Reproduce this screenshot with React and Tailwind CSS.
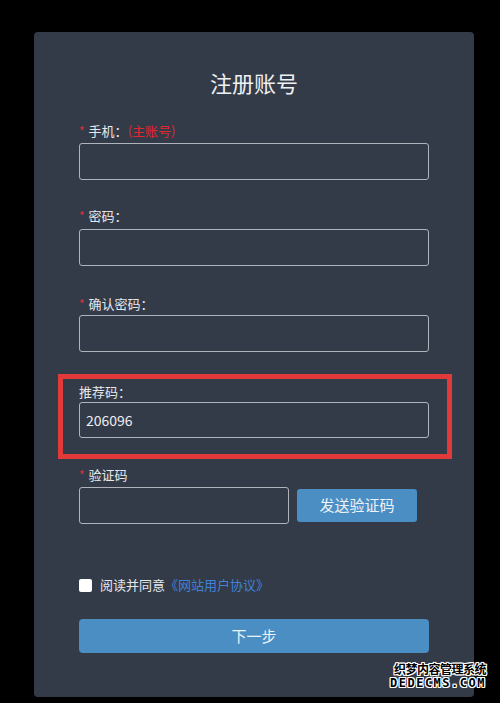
export default function App() {
  return (
    <div
      className="relative min-h-[703px] w-[500px] bg-black pt-[32px] pl-[34px]"
      style={{ fontFamily: '"Noto Sans CJK SC", "Noto Sans", sans-serif' }}
    >
      <div className="w-[440px] h-[665px] rounded-[4px] bg-[#343b48] px-[45px] pt-[35px]">
        <h1 className="text-center text-[22px] leading-[30px] text-[#eef0f3]">注册账号</h1>

        {/* 手机 */}
        <div className="mt-[25px] flex items-center text-[13px] leading-[18px] text-[#e6e8ec]">
          <span className="text-[#d8313b] mr-[4px] text-[12px]">*</span>
          <span>手机：</span>
          <span className="text-[#e0262f]">(主账号)</span>
        </div>
        <input className="mt-[3px] block w-[350px] h-[37px] rounded-[3px] border-[1.5px] border-[#aeb3bc] bg-transparent" />

        {/* 密码 */}
        <div className="mt-[27px] flex items-center text-[13px] leading-[18px] text-[#e6e8ec]">
          <span className="text-[#d8313b] mr-[4px] text-[12px]">*</span>
          <span>密码：</span>
        </div>
        <input type="password" className="mt-[4px] block w-[350px] h-[37px] rounded-[3px] border-[1.5px] border-[#aeb3bc] bg-transparent" />

        {/* 确认密码 */}
        <div className="mt-[29px] flex items-center text-[13px] leading-[18px] text-[#e6e8ec]">
          <span className="text-[#d8313b] mr-[4px] text-[12px]">*</span>
          <span>确认密码：</span>
        </div>
        <input type="password" className="mt-[2px] block w-[350px] h-[37px] rounded-[3px] border-[1.5px] border-[#aeb3bc] bg-transparent" />

        {/* 推荐码 highlighted */}
        <div className="mt-[22px] -ml-[21px] w-[394px] border-[5px] border-[#e23a3a] pl-[16px] pt-[4px] pb-[16px]">
          <div className="text-[13px] leading-[18px] text-[#e6e8ec]">推荐码：</div>
          <div className="mt-[1px] flex items-center w-[350px] h-[36px] rounded-[3px] border-[1.5px] border-[#aeb3bc] px-[6px] text-[14px] text-[#eceef1]">
            206096
          </div>
        </div>

        {/* 验证码 */}
        <div className="mt-[7px] flex items-center text-[13px] leading-[18px] text-[#e6e8ec]">
          <span className="text-[#d8313b] mr-[4px] text-[12px]">*</span>
          <span>验证码</span>
        </div>
        <div className="mt-[3px] flex items-center gap-[8px]">
          <input className="block w-[210px] h-[37px] rounded-[3px] border-[1.5px] border-[#aeb3bc] bg-transparent" />
          <button className="w-[120px] h-[33px] rounded-[3px] bg-[#4a8ec4] text-[15px] text-[#eef3f8]">
            发送验证码
          </button>
        </div>

        {/* 协议 */}
        <div className="mt-[52px] flex items-center text-[13px] leading-[18px]">
          <span className="w-[13px] h-[13px] rounded-[2px] bg-white mr-[8px]" />
          <span className="text-[#e6e8ec]">阅读并同意</span>
          <span className="text-[#3f82d6]">《网站用户协议》</span>
        </div>

        <button className="mt-[25px] w-[350px] h-[34px] rounded-[4px] bg-[#4a8ec4] text-[15px] text-[#eef3f8]">
          下一步
        </button>
      </div>

      <div className="absolute left-[390px] top-[661px] text-right font-bold leading-[15px] text-black [text-shadow:1px_0_0_#fff,-1px_0_0_#fff,0_1px_0_#fff,0_-1px_0_#fff,1px_1px_0_#fff,-1px_-1px_0_#fff,1px_-1px_0_#fff,-1px_1px_0_#fff]">
        <div className="text-[12px] tracking-[-0.5px]">织梦内容管理系统</div>
        <div className="text-[12px] tracking-[1.5px]" style={{ fontFamily: '"DejaVu Sans Mono", monospace' }}>DEDECMS.COM</div>
      </div>
    </div>
  );
}
